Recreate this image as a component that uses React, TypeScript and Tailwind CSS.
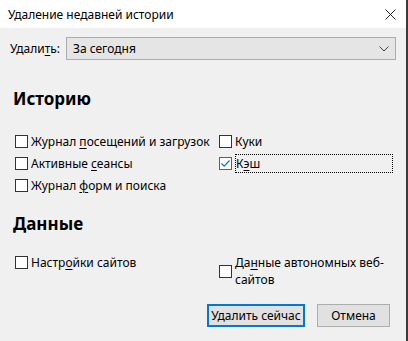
import { useState } from 'react';

function Box({ checked }: { checked?: boolean }) {
    return (
        <span className={'flex h-[13px] w-[13px] shrink-0 items-center justify-center border bg-white ' + (checked ? 'border-[#0078d7]' : 'border-[#333333]')}>
            {checked && (
                <svg width="11" height="11" viewBox="0 0 11 11" fill="none">
                    <path d="M1.5 5.5 L4.2 8.2 L9.5 2.5" stroke="#0078d7" strokeWidth="1.2" />
                </svg>
            )}
        </span>
    );
}

function Check({ label, checked, focus }: { label: React.ReactNode; checked?: boolean; focus?: boolean }) {
    return (
        <div className="flex h-[22px] items-center gap-[3px]">
            <Box checked={checked} />
            <span className={focus ? 'w-[158px] h-[19px] flex items-center border border-dotted border-black' : ''}>{label}</span>
        </div>
    );
}

export default function App() {
    const [period] = useState('За сегодня');
    return (
        <div className="flex h-[341px] w-[408px] flex-col border-r-2 border-[#3a3a3a] bg-[#f0f0f0] text-[12px] leading-[17px] text-black" style={{ fontFamily: '"Noto Sans", "Open Sans", sans-serif' }}>
            <div className="flex h-[28px] shrink-0 items-center justify-between bg-white pl-2 pr-[10px]">
                <span>Удаление недавней истории</span>
                <svg width="11" height="11" viewBox="0 0 11 11">
                    <path d="M0.5 0.5 L10.5 10.5 M10.5 0.5 L0.5 10.5" stroke="#222" strokeWidth="1" />
                </svg>
            </div>

            <div className="mt-[9px] flex items-center pl-[10px]">
                <span className="w-[56px]">Удали<u className="underline-offset-2">т</u>ь:</span>
                <div className="flex h-[23px] w-[330px] items-center justify-between border border-[#adadad] bg-[#e5e5e5] pl-[6px] pr-[6px]">
                    <span>{period}</span>
                    <svg width="10" height="6" viewBox="0 0 10 6" fill="none">
                        <path d="M0.5 0.5 L5 5 L9.5 0.5" stroke="#444" strokeWidth="1" />
                    </svg>
                </div>
            </div>

            <div className="mt-[27px] pl-[13px] text-[17px] leading-[24px] font-bold">Историю</div>

            <div className="mt-[19px] grid grid-cols-[204px_1fr] pl-[15px]">
                <div className="flex flex-col">
                    <Check label={<>Журнал <u className="underline-offset-2">п</u>осещений и загрузок</>} />
                    <Check label={<>Активные <u className="underline-offset-2">с</u>еансы</>} />
                    <Check label={<>Журнал <u className="underline-offset-2">ф</u>орм и поиска</>} />
                </div>
                <div className="flex flex-col">
                    <Check label="Куки" />
                    <Check label={<>К<u className="underline-offset-2">э</u>ш</>} checked focus />
                </div>
            </div>

            <div className="mt-[16px] pl-[13px] text-[17px] leading-[24px] font-bold">Данные</div>

            <div className="mt-[18px] grid grid-cols-[204px_1fr] items-start pl-[15px]">
                <div className="flex items-center gap-[3px]">
                    <Box />
                    <span>Настр<u className="underline-offset-2">о</u>йки сайтов</span>
                </div>
                <div className="flex items-center gap-[3px]">
                    <Box />
                    <span className="flex flex-col leading-[17px]">
                        <span>Да<u className="underline-offset-2">н</u>ные автономных веб-</span>
                        <span>сайтов</span>
                    </span>
                </div>
            </div>

            <div className="mt-[16px] flex justify-end gap-[12px] pr-[16px]">
                <button className="h-[23px] w-[98px] border-2 border-[#0078d7] bg-[#e1e1e1]">Удалить сейчас</button>
                <button className="h-[23px] w-[73px] border border-[#adadad] bg-[#e1e1e1]">Отмена</button>
            </div>
        </div>
    );
}
